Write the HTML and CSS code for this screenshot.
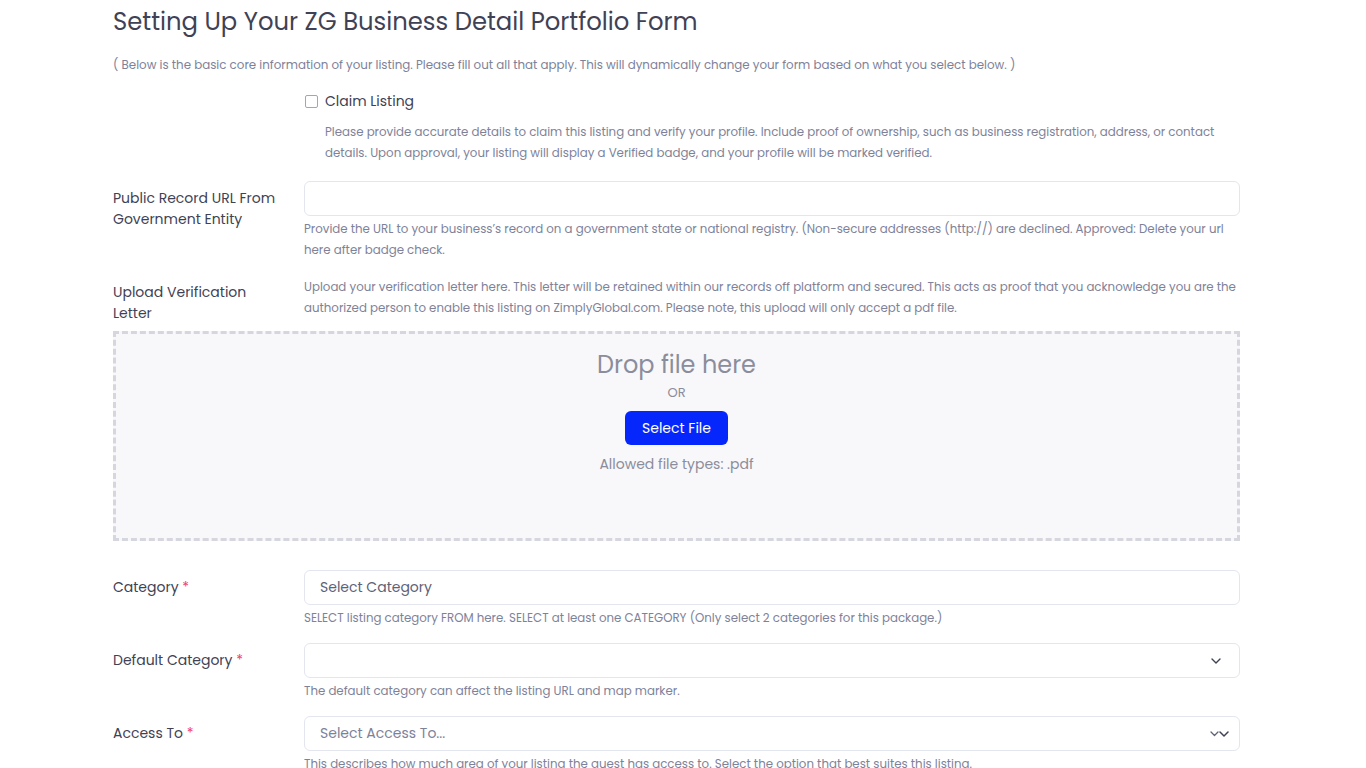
FILE: index.html
```html
<!DOCTYPE html>
<html lang="en">
<head>
<meta charset="utf-8">
<title>ZG Business Detail Portfolio Form</title>
<link rel="stylesheet" href="styles.css">
</head>
<body>
<main class="page">
  <h1 class="title">Setting Up Your ZG Business Detail Portfolio Form</h1>
  <p class="intro">( Below is the basic core information of your listing. Please fill out all that apply. This will dynamically change your form based on what you select below. )</p>

  <div class="row row-claim">
    <div class="label"></div>
    <div class="field">
      <label class="check"><span class="box"></span><span class="check-text">Claim Listing</span></label>
      <p class="help help-claim">Please provide accurate details to claim this listing and verify your profile. Include proof of ownership, such as business registration, address, or contact details. Upon approval, your listing will display a Verified badge, and your profile will be marked verified.</p>
    </div>
  </div>

  <div class="row row-url">
    <div class="label label-top">Public Record URL From Government Entity</div>
    <div class="field">
      <div class="input"></div>
      <p class="help">Provide the URL to your business’s record on a government state or national registry. (Non-secure addresses (http://) are declined. Approved: Delete your url here after badge check.</p>
    </div>
  </div>

  <div class="row">
    <div class="label label-upload">Upload Verification Letter</div>
    <div class="field">
      <p class="help help-upload">Upload your verification letter here. This letter will be retained within our records off platform and secured. This acts as proof that you acknowledge you are the authorized person to enable this listing on ZimplyGlobal.com. Please note, this upload will only accept a pdf file.</p>
    </div>
  </div>

  <div class="dropzone">
    <div class="drop-title">Drop file here</div>
    <div class="drop-or">OR</div>
    <button class="btn" type="button">Select File</button>
    <div class="drop-types">Allowed file types: .pdf</div>
  </div>

  <div class="row row-cat">
    <div class="label label-mid">Category <span class="req">*</span></div>
    <div class="field">
      <div class="input"><span class="ph ph-dark">Select Category</span></div>
      <p class="help">SELECT listing category FROM here. SELECT at least one CATEGORY (Only select 2 categories for this package.)</p>
    </div>
  </div>

  <div class="row row-tight">
    <div class="label label-mid">Default Category <span class="req">*</span></div>
    <div class="field">
      <div class="input select">
        <svg class="chev" width="10" height="6" viewBox="0 0 10 6"><path d="M1 1l4 4 4-4" fill="none" stroke="#3f4254" stroke-width="1.4" stroke-linecap="round" stroke-linejoin="round"/></svg>
      </div>
      <p class="help">The default category can affect the listing URL and map marker.</p>
    </div>
  </div>

  <div class="row row-tight">
    <div class="label label-mid">Access To <span class="req">*</span></div>
    <div class="field">
      <div class="input select"><span class="ph ph-light">Select Access To...</span>
        <span class="chevs">
          <svg width="9" height="6" viewBox="0 0 9 6"><path d="M1 1l3.5 3.5L8 1" fill="none" stroke="#5e6278" stroke-width="1.3" stroke-linecap="round" stroke-linejoin="round"/></svg>
          <svg width="10" height="6" viewBox="0 0 10 6"><path d="M1 1l4 4 4-4" fill="none" stroke="#3f4254" stroke-width="1.5" stroke-linecap="round" stroke-linejoin="round"/></svg>
        </span>
      </div>
      <p class="help">This describes how much area of your listing the guest has access to. Select the option that best suites this listing.</p>
    </div>
  </div>
</main>
</body>
</html>
```

FILE: styles.css
```css
html, body {
  margin: 0;
  padding: 0;
  background: #ffffff;
}

body {
  font-family: "Poppins", "Open Sans", "Liberation Sans", sans-serif;
  color: #3f4254;
}

.page {
  width: 1127px;
  margin-left: 113px;
  padding-top: 6px;
}

.title {
  margin: 0;
  font-size: 24.3px;
  font-weight: 400;
  line-height: 31px;
  color: #3f4254;
}

.intro {
  margin: 18px 0 0;
  font-size: 11.85px;
  line-height: 20px;
  color: #7e8299;
}

.row {
  display: grid;
  grid-template-columns: 191px 1fr;
  margin-top: 16px;
}

.row-claim { margin-top: 16px; }
.row-url { margin-top: 17px; }
.row-tight { margin-top: 14.5px; }

.label {
  font-size: 14px;
  line-height: 21px;
  color: #3f4254;
  padding-right: 20px;
}

.label-top { padding-top: 6.5px; }
.label-upload { padding-top: 5px; }
.label-mid { padding-top: 6.5px; }

.req { color: #f1416c; }

.check {
  display: flex;
  align-items: center;
  gap: 7px;
  height: 21px;
  padding-left: 1px;
}

.box {
  width: 11px;
  height: 11px;
  border: 1px solid #a1a5b7;
  border-radius: 2px;
  background: #fff;
}

.check-text {
  font-size: 14px;
  color: #3f4254;
}

.help {
  margin: 2.5px 0 0;
  font-size: 11.8px;
  line-height: 21px;
  color: #7e8299;
}

.help-claim {
  margin-top: 10px;
  padding-left: 21px;
}

.help-upload { margin-top: 0; }

.input {
  box-sizing: border-box;
  height: 35px;
  border: 1px solid #e4e6ef;
  border-radius: 6px;
  background: #fff;
  display: flex;
  align-items: center;
  padding: 0 15px;
}

.ph { font-size: 14px; }
.ph-dark { color: #5e6278; }
.ph-light { color: #7e8299; }

.chev { margin-left: auto; margin-right: 3px; }

.chevs {
  margin-left: auto;
  display: flex;
  align-items: center;
  margin-right: -5px;
}

.dropzone {
  box-sizing: border-box;
  margin-top: 7.5px;
  height: 210px;
  border: 3px dashed #d5d6de;
  background: #f8f8fb;
  display: flex;
  flex-direction: column;
  align-items: center;
  padding-top: 15px;
}

.drop-title {
  font-size: 24px;
  line-height: 31px;
  color: #8b8d9c;
}

.drop-or {
  margin-top: 3px;
  font-size: 13px;
  line-height: 20px;
  color: #8b8d9c;
}

.btn {
  margin-top: 8px;
  width: 103px;
  height: 34px;
  border: 0;
  border-radius: 6px;
  background: #0527fb;
  color: #fff;
  font-family: inherit;
  font-size: 14px;
}

.drop-types {
  margin-top: 8.5px;
  font-size: 14px;
  line-height: 21px;
  color: #8b8d9c;
}

.row-cat { margin-top: 29px; }
```
